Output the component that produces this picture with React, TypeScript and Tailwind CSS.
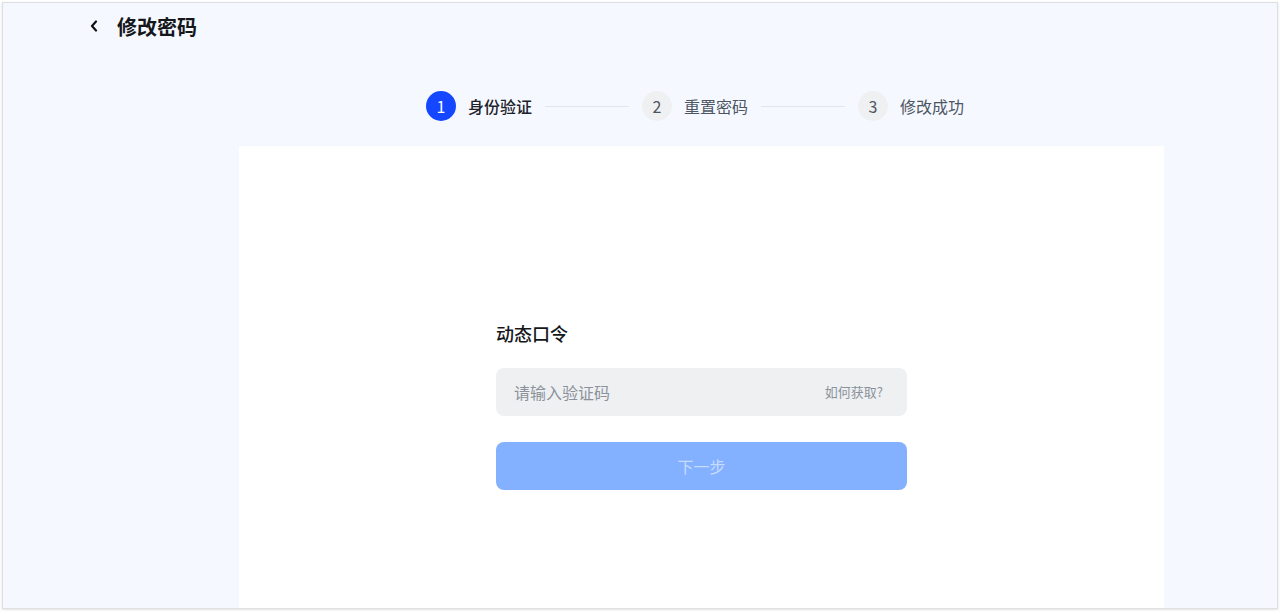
import React from "react";

function Step({ n, label, active }: { n: number; label: string; active?: boolean }) {
  return (
    <div className="flex items-center">
      <div
        className={
          active
            ? "flex h-[30px] w-[30px] items-center justify-center rounded-full bg-[#1447ff] text-[16px] text-white"
            : "flex h-[30px] w-[30px] items-center justify-center rounded-full bg-[#eff0f2] text-[16px] text-[#4e5563]"
        }
      >
        {n}
      </div>
      <span
        className={
          active
            ? "ml-[12px] text-[16px] font-medium text-[#1d2129]"
            : "ml-[12px] text-[16px] text-[#4e5563]"
        }
      >
        {label}
      </span>
    </div>
  );
}

function Line() {
  return <div className="mx-[13px] h-px w-[84px] bg-[#e3e5e9]" />;
}

export default function App() {
  return (
    <div
      className="h-[611px] w-[1280px] overflow-hidden bg-white pl-[2px] pt-[2px]"
      style={{ fontFamily: '"Noto Sans CJK SC", "Noto Sans", sans-serif' }}
    >
      <div className="flex h-[607px] w-[1276px] flex-col border border-[#dedfe2] bg-[#f5f9ff] shadow-[0_1px_3px_rgba(0,0,0,0.12)]">
        <div className="flex h-[48px] items-center pl-[87px]">
          <svg width="8" height="12" viewBox="0 0 8 12" className="mt-[-2px]">
            <path d="M6 1.5 L2 6 L6 10.5" fill="none" stroke="#111" strokeWidth="2.2" strokeLinecap="round" strokeLinejoin="round" />
          </svg>
          <span className="ml-[19px] text-[20px] font-semibold text-[#15171b]">修改密码</span>
        </div>
        <div className="flex flex-1 flex-col pl-[236px] pr-[113px]">
          <div className="mt-[40px] flex h-[55px] items-start pl-[187px]">
            <div className="flex h-[30px] items-center">
              <Step n={1} label="身份验证" active />
              <Line />
              <Step n={2} label="重置密码" />
              <Line />
              <Step n={3} label="修改成功" />
            </div>
          </div>
          <div className="flex-1 bg-white">
            <div className="mx-auto w-[411px] pt-[174px]">
              <div className="text-[18px] font-medium leading-[26px] text-[#15171b]">动态口令</div>
              <div className="mt-[22px] flex h-[48px] items-center justify-between rounded-[8px] bg-[#eef0f2] pl-[18px] pr-[24px]">
                <span className="text-[16px] text-[#8c929c]">请输入验证码</span>
                <span className="text-[13px] text-[#8c929c]">如何获取?</span>
              </div>
              <div className="mt-[26px] flex h-[48px] items-center justify-center rounded-[8px] bg-[#84b1ff] text-[16px] text-[#c6dbff]">
                下一步
              </div>
            </div>
          </div>
        </div>
      </div>
    </div>
  );
}
